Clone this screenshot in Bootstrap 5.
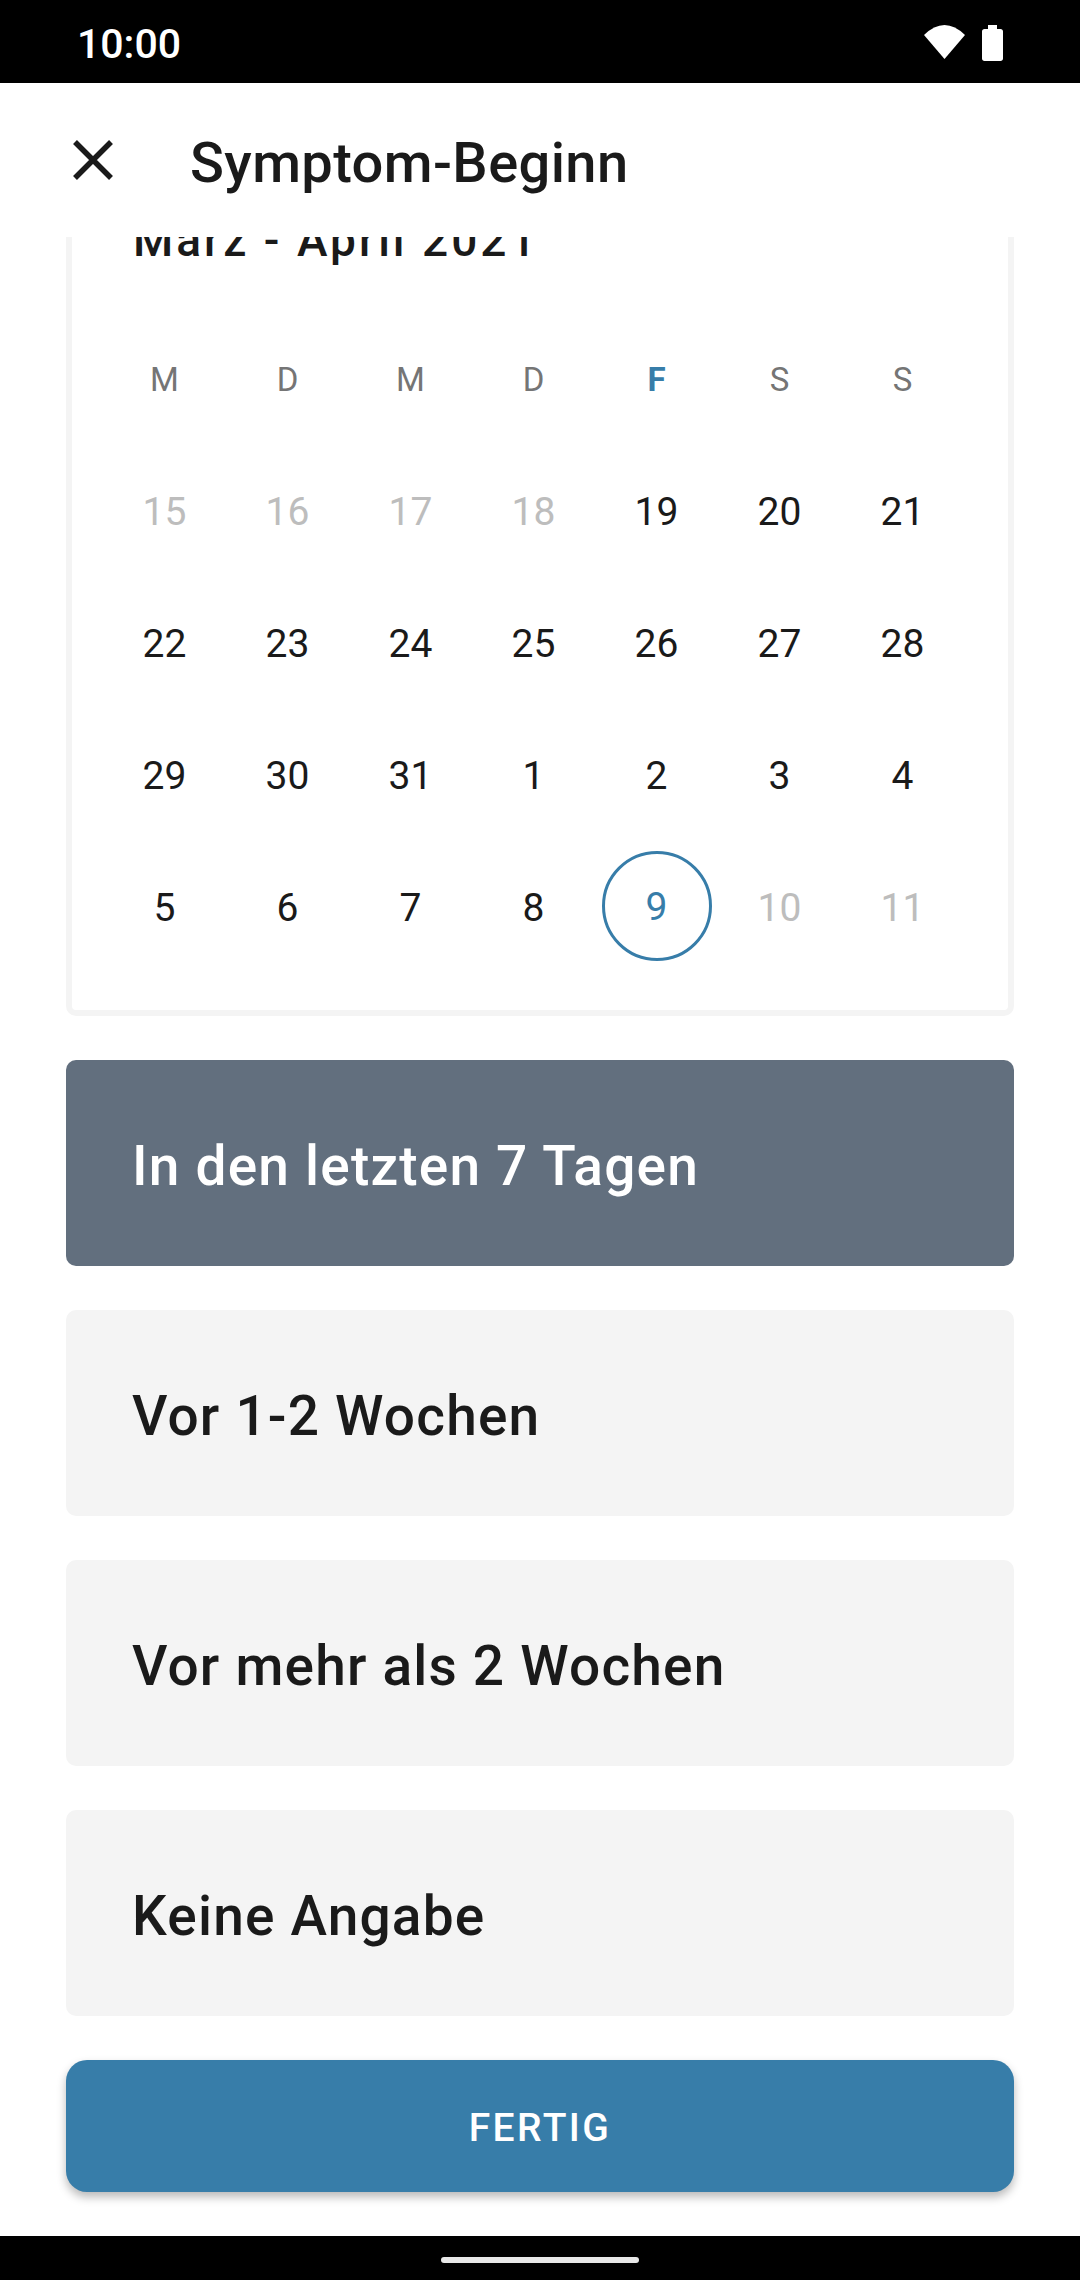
<!DOCTYPE html>
<html lang="de">
<head>
    <meta charset="UTF-8">
    <meta name="viewport" content="width=device-width, initial-scale=1.0">
    <title>Symptom-Beginn</title>
    <link rel="stylesheet" href="https://cdn.jsdelivr.net/npm/bootstrap@5.3.0/dist/css/bootstrap.min.css">
    <style>
        html, body { margin: 0; background: #fff; }
        body { font-family: Roboto, "Liberation Sans", sans-serif; color: #1a1a1a; }
        .phone-screen { width: 1080px; height: 2280px; overflow: hidden; }
        .status-strip { height: 83px; background: #000; color: #fff; padding: 7px 76px 0 77px; font-size: 41px; font-weight: 500; }
        .status-icons { margin-top: -7px; }
        .tool-strip { height: 154px; padding-left: 68px; }
        .tool-close { width: 50px; height: 50px; margin-right: 72px; }
        .tool-title { font-size: 56px; font-weight: 500; letter-spacing: .4px; margin: 0; padding-top: 6px; line-height: 1; }
        .content-clip { height: 1999px; overflow: hidden; padding: 0 66px; }
        .month-box { height: 901px; margin-top: -122px; border: 6px solid #f4f4f4; border-radius: 10px; padding: 0 31px; }
        .month-title { font-size: 46px; font-weight: 500; letter-spacing: 3px; height: 192px; padding: 93px 0 0 30px; margin: 0; line-height: 52px; }
        .head-row { height: 132px; }
        .day-row { height: 132px; }
        .day-cell { width: 123px; flex: none; font-size: 39px; padding-top: 2px; }
        .head-cell { color: #757575; font-size: 33px; }
        .head-now { color: #377da9; font-weight: 700; }
        .day-off { color: #bdbdbd; }
        .day-sel { color: #377da9; }
        .sel-ring { width: 110px; height: 110px; border: 3px solid #377da9; border-radius: 50%; margin-top: -4px; padding-top: 2px; }
        .answer-box { height: 206px; margin-top: 44px; border-radius: 10px; background: #f4f4f4; padding: 6px 0 0 66px; font-size: 55px; font-weight: 500; letter-spacing: 1.2px; }
        .answer-on { background: #626f7e; color: #fff; }
        .done-btn { height: 132px; margin-top: 44px; padding-top: 6px; border: 0; border-radius: 21px; background: #377da9; color: #fff; font-size: 39px; font-weight: 500; letter-spacing: 2.4px; box-shadow: 0 5px 10px rgba(0,0,0,.28); }
        .nav-strip { height: 44px; background: #000; }
        .nav-handle { width: 198px; height: 6px; background: #e8e8e8; border-radius: 3px; margin-top: 21px; }
    </style>
</head>
<body>
<div class="phone-screen d-flex flex-column">
    <div class="status-strip d-flex align-items-center justify-content-between">
        <span>10:00</span>
        <svg class="status-icons" width="80" height="83" viewBox="0 0 80 83">
            <path d="M0 35Q20.500 15 41 35L20.500 59Z" fill="#fff"/>
            <path d="M64 29V25H73V29H76.500C78 29 79 30 79 31.500V58.500C79 60 78 61 76.500 61H60.500C59 61 58 60 58 58.500V31.500C58 30 59 29 60.500 29Z" fill="#fff"/>
        </svg>
    </div>

    <div class="tool-strip d-flex align-items-center">
        <svg class="tool-close" viewBox="0 0 50 50">
            <path d="M7 7L43 43M43 7L7 43" stroke="#1a1a1a" stroke-width="5.500" fill="none"/>
        </svg>
        <h1 class="tool-title">Symptom-Beginn</h1>
    </div>

    <div class="content-clip flex-grow-1">
        <div class="month-box">
            <h2 class="month-title">März - April 2021</h2>
            <div class="head-row d-flex align-items-center" id="headRow"></div>
            <div id="dayRows"></div>
        </div>
        <div class="answer-box answer-on d-flex align-items-center">In den letzten 7 Tagen</div>
        <div class="answer-box d-flex align-items-center">Vor 1-2 Wochen</div>
        <div class="answer-box d-flex align-items-center">Vor mehr als 2 Wochen</div>
        <div class="answer-box d-flex align-items-center">Keine Angabe</div>
        <button type="button" class="done-btn w-100 d-block">FERTIG</button>
    </div>

    <div class="nav-strip d-flex justify-content-center">
        <div class="nav-handle"></div>
    </div>
</div>

<script>
    // Calendar rows: days before the 19th and after the 9th are switched off
    const heads = ['M', 'D', 'M', 'D', 'F', 'S', 'S'];
    const rows = [
        [15, 16, 17, 18, 19, 20, 21],
        [22, 23, 24, 25, 26, 27, 28],
        [29, 30, 31, 1, 2, 3, 4],
        [5, 6, 7, 8, 9, 10, 11]
    ];

    document.getElementById('headRow').innerHTML = heads.map((h, i) =>
        `<div class="day-cell head-cell text-center ${i === 4 ? 'head-now' : ''}">${h}</div>`
    ).join('');

    document.getElementById('dayRows').innerHTML = rows.map((row, r) => {
        const cells = row.map((d, c) => {
            if (r === 3 && c === 4) {
                return `<div class="day-cell d-flex justify-content-center"><div class="sel-ring day-sel d-flex align-items-center justify-content-center">${d}</div></div>`;
            }
            const off = (r === 0 && c < 4) || (r === 3 && c > 4);
            return `<div class="day-cell text-center ${off ? 'day-off' : ''}">${d}</div>`;
        }).join('');
        return `<div class="day-row d-flex align-items-center">${cells}</div>`;
    }).join('');
</script>
<script src="https://cdn.jsdelivr.net/npm/bootstrap@5.3.0/dist/js/bootstrap.bundle.min.js"></script>
</body>
</html>
